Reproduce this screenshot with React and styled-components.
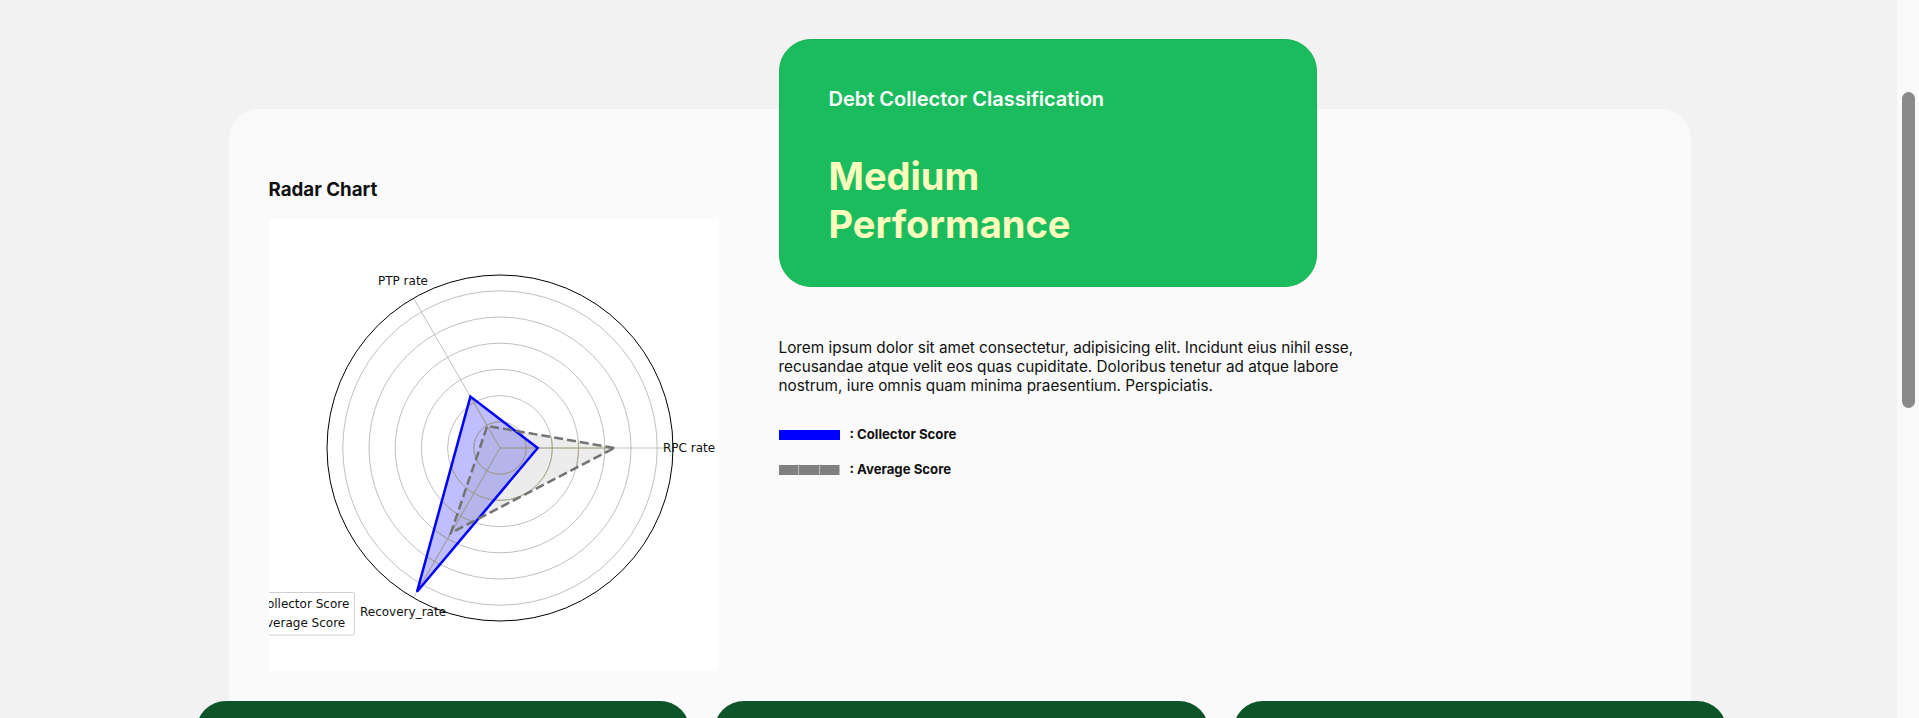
import React, { useLayoutEffect, useRef, useState } from 'react';
import styled, { createGlobalStyle } from 'styled-components';

const GlobalStyle = createGlobalStyle`
    html, body {
        margin: 0;
        padding: 0;
        height: 100%;
        overflow: hidden;
    }
    body {
        background: #f2f2f2;
        font-family: Inter, "Liberation Sans", sans-serif;
        color: #111111;
    }
    #root {
        height: 100%;
    }
`;

// chart geometry, measured off the matplotlib export
const CX = 231;
const CY = 229;
const R = 173;
const UNIT = 26.2;
const RINGS = [1, 2, 3, 4, 5, 6];
const AXES = [0, 120, 240];

const polar = (r, deg) => {
    const a = (deg * Math.PI) / 180;
    return [CX + r * Math.cos(a), CY - r * Math.sin(a)];
};

const toPoints = values =>
    values.map((r, i) => polar(r, AXES[i]).map(v => v.toFixed(1)).join(',')).join(' ');

const collector = [37.7, 59.3, 166];
const average = [114.3, 25.5, 98.3];

function RadarChart() {
    const blue = toPoints(collector);
    const gray = toPoints(average);

    const grid = color => (
        <g stroke={color} strokeWidth="0.8" fill="none">
            {RINGS.map(k => (
                <circle key={k} cx={CX} cy={CY} r={k * UNIT} />
            ))}
            {AXES.map(deg => {
                const [x, y] = polar(R, deg);
                return <line key={deg} x1={CX} y1={CY} x2={x} y2={y} />;
            })}
        </g>
    );

    return (
        <ChartFrame width="450" height="452" viewBox="0 0 450 452">
            <defs>
                <clipPath id="shapes">
                    <polygon points={blue} />
                    <polygon points={gray} />
                </clipPath>
            </defs>
            <rect width="450" height="452" fill="#ffffff" />
            {grid('#b0b0b0')}
            <polygon points={blue} fill="rgba(0,0,255,0.25)" stroke="none" />
            <polygon points={gray} fill="rgba(128,128,128,0.15)" stroke="none" />
            <g clipPath="url(#shapes)">{grid('#aaa37a')}</g>
            <polygon points={blue} fill="none" stroke="#0000ff" strokeWidth="2.5" />
            <polygon points={gray} fill="none" stroke="#737373" strokeWidth="2.5" strokeDasharray="9 4" />
            <circle cx={CX} cy={CY} r={R} fill="none" stroke="#000000" strokeWidth="1" />

            <g fontFamily="'DejaVu Sans', sans-serif" fontSize="12" fill="#111111">
                <text x="109" y="66">PTP rate</text>
                <text x="394" y="233">RPC rate</text>
                <text x="91" y="397">Recovery_rate</text>
            </g>

            {/* matplotlib legend, its left half falls outside the exported image */}
            <g>
                <rect x="-60" y="373.5" width="145.5" height="42.5" rx="2" fill="#ffffff" fillOpacity="0.8" stroke="#d0d0d0" strokeWidth="1" />
                <line x1="-48" y1="384.5" x2="-28" y2="384.5" stroke="#0000ff" strokeWidth="2.5" />
                <line x1="-48" y1="403.5" x2="-28" y2="403.5" stroke="#777777" strokeWidth="2.5" strokeDasharray="9 4" />
                <g fontFamily="'DejaVu Sans', sans-serif" fontSize="12" fill="#111111">
                    <text x="-10.5" y="389">Collector Score</text>
                    <text x="-10.5" y="408">Average Score</text>
                </g>
            </g>
        </ChartFrame>
    );
}

const legend = [
    { id: 'collector', label: ': Collector Score', dashed: false },
    { id: 'average', label: ': Average Score', dashed: true },
];

// the page is viewed scrolled past its top spacing
const SCROLL_OFFSET = 209;

export default function App() {
    const scrollRef = useRef(null);
    const [thumb, setThumb] = useState({ top: 0, height: 0 });

    const measure = () => {
        const el = scrollRef.current;
        if (!el) return;
        const { scrollTop, scrollHeight, clientHeight } = el;
        const height = (clientHeight * clientHeight) / scrollHeight;
        const range = scrollHeight - clientHeight;
        const top = range > 0 ? ((clientHeight - height) * scrollTop) / range : 0;
        setThumb({ top, height });
    };

    useLayoutEffect(() => {
        if (scrollRef.current) scrollRef.current.scrollTop = SCROLL_OFFSET;
        measure();
    }, []);

    return (
        <>
            <GlobalStyle />
            <ScrollArea ref={scrollRef} onScroll={measure}>
                <Page>
                    <MainCard>
                        <TopSection>
                            <ChartColumn>
                                <ChartTitle>Radar Chart</ChartTitle>
                                <RadarChart />
                            </ChartColumn>

                            <InfoColumn>
                                <ClassCard>
                                    <ClassLabel>Debt Collector Classification</ClassLabel>
                                    <ClassValue>Medium Performance</ClassValue>
                                </ClassCard>

                                <Description>
                                    Lorem ipsum dolor sit amet consectetur, adipisicing elit. Incidunt eius nihil esse,
                                    recusandae atque velit eos quas cupiditate. Doloribus tenetur ad atque labore
                                    nostrum, iure omnis quam minima praesentium. Perspiciatis.
                                </Description>

                                <LegendList>
                                    {legend.map(item => (
                                        <LegendRow key={item.id}>
                                            <Swatch $dashed={item.dashed} />
                                            <span>{item.label}</span>
                                        </LegendRow>
                                    ))}
                                </LegendList>
                            </InfoColumn>
                        </TopSection>

                        <BottomRow>
                            <BottomCard />
                            <BottomCard />
                            <BottomCard />
                        </BottomRow>
                    </MainCard>
                </Page>
            </ScrollArea>
            <ScrollTrack>
                <ScrollThumb style={{ top: thumb.top, height: thumb.height }} />
            </ScrollTrack>
        </>
    );
}

const ScrollArea = styled.div`
    height: 100vh;
    overflow-y: auto;
    overflow-x: hidden;
    background: #f2f2f2;
    scrollbar-width: none;
    &::-webkit-scrollbar {
        display: none;
    }
`;

const ScrollTrack = styled.div`
    position: fixed;
    top: 0;
    right: 0;
    bottom: 0;
    width: 22px;
    background: #fafafa;
`;

const ScrollThumb = styled.div`
    position: absolute;
    left: 5px;
    right: 4px;
    background: #8a8a8a;
    border-radius: 7px;
`;

const Page = styled.div`
    width: 100vw;
    display: flex;
    flex-direction: column;
    align-items: center;
    padding: ${109 + SCROLL_OFFSET}px 0 141px;
    box-sizing: border-box;
`;

const MainCard = styled.section`
    width: 1462px;
    box-sizing: border-box;
    background: #fafafa;
    border-radius: 30px;
    padding: 40px 40px 80px;
`;

const TopSection = styled.div`
    display: flex;
    align-items: flex-start;
    gap: 60px;
`;

const ChartColumn = styled.div`
    width: 450px;
    padding-top: 29px;
    display: flex;
    flex-direction: column;
`;

const ChartTitle = styled.h3`
    margin: 0 0 18px;
    font-size: 18.72px;
    font-weight: 700;
    line-height: 23px;
    color: #111111;
`;

const ChartFrame = styled.svg`
    display: block;
    background: #ffffff;
`;

const InfoColumn = styled.div`
    margin-top: -110px;
    display: flex;
    flex-direction: column;
`;

const ClassCard = styled.div`
    width: 538px;
    box-sizing: border-box;
    background: #1bbc5d;
    border: 1px solid #19b358;
    border-radius: 32px;
    padding: 47px 49px 38px;
    color: #ffffff;
`;

const ClassLabel = styled.div`
    font-size: 20px;
    font-weight: 600;
    line-height: 24px;
`;

const ClassValue = styled.div`
    margin-top: 41px;
    max-width: 280px;
    font-size: 38px;
    font-weight: 700;
    line-height: 48px;
    color: #fdfdbd;
`;

const Description = styled.p`
    margin: 51px 0 0;
    width: 600px;
    font-size: 15.3px;
    line-height: 19px;
    color: #111111;
`;

const LegendList = styled.div`
    margin-top: 32px;
    display: flex;
    flex-direction: column;
    gap: 20px;
`;

const LegendRow = styled.div`
    display: flex;
    align-items: center;
    gap: 10px;
    height: 15px;
    font-size: 13.2px;
    font-weight: 700;
    line-height: 15px;
    color: #111111;
`;

const Swatch = styled.span`
    width: 61px;
    height: 10px;
    flex-shrink: 0;
    background: ${p => (p.$dashed
        ? 'repeating-linear-gradient(90deg, #808080 0 19.3px, #bdbdbd 19.3px 20.3px)'
        : '#0000ff')};
`;

const BottomRow = styled.div`
    margin: 30px -77px 0 -73px;
    display: grid;
    grid-template-columns: repeat(3, 1fr);
    gap: 24px;
`;

const BottomCard = styled.div`
    height: 500px;
    background: #0d5429;
    border-radius: 30px;
`;
